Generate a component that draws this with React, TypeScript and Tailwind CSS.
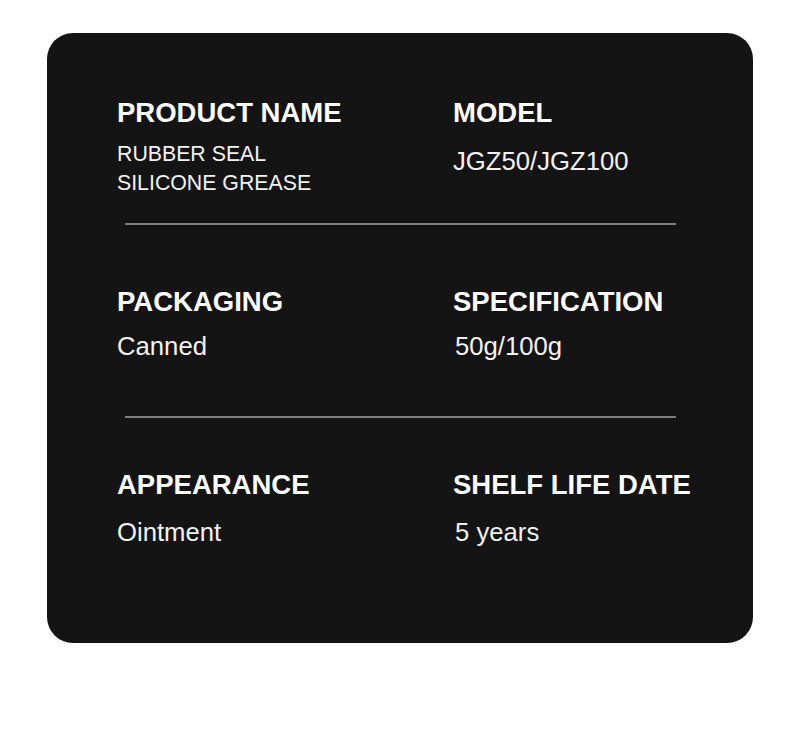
const rows = [
  {
    left: { title: 'PRODUCT NAME', lines: ['RUBBER SEAL', 'SILICONE GREASE'] },
    right: { title: 'MODEL', lines: ['JGZ50/JGZ100'] },
  },
  {
    left: { title: 'PACKAGING', lines: ['Canned'] },
    right: { title: 'SPECIFICATION', lines: ['50g/100g'] },
  },
  {
    left: { title: 'APPEARANCE', lines: ['Ointment'] },
    right: { title: 'SHELF LIFE DATE', lines: ['5 years'] },
  },
]

function Heading({ children }: { children: string }) {
  return <h3 className="text-[27.5px] leading-[32px] font-bold text-white whitespace-nowrap">{children}</h3>
}

function Divider({ className }: { className: string }) {
  return <div className={`ml-[8px] w-[551px] h-[2px] bg-[#7d7d7d] ${className}`} />
}

export default function App() {
  return (
    <div className="w-[790px] h-[736px] bg-white pt-[33px] pl-[47px] font-['Liberation_Sans',Arial,sans-serif]">
      <div className="w-[706px] h-[610px] rounded-[26px] bg-[#141414] pt-[64px] pl-[70px]">
        {/* Row 1 */}
        <div className="grid grid-cols-[336px_1fr] items-start">
          <div>
            <Heading>{rows[0].left.title}</Heading>
            <div className="mt-[11px] text-[21.3px] leading-[29px] text-[#f2f2f2]">
              {rows[0].left.lines.map((l) => (
                <p key={l}>{l}</p>
              ))}
            </div>
          </div>
          <div>
            <Heading>{rows[0].right.title}</Heading>
            <p className="mt-[17px] text-[25.7px] leading-[30px] text-[#f2f2f2]">{rows[0].right.lines[0]}</p>
          </div>
        </div>

        <Divider className="mt-[25px]" />

        {/* Row 2 */}
        <div className="mt-[61px] grid grid-cols-[336px_1fr] items-start">
          <div>
            <Heading>{rows[1].left.title}</Heading>
            <p className="mt-[13px] text-[25.7px] leading-[30px] text-[#f2f2f2]">{rows[1].left.lines[0]}</p>
          </div>
          <div>
            <Heading>{rows[1].right.title}</Heading>
            <p className="mt-[13px] pl-[2px] text-[25.7px] leading-[30px] text-[#f2f2f2]">{rows[1].right.lines[0]}</p>
          </div>
        </div>

        <Divider className="mt-[55px]" />

        {/* Row 3 */}
        <div className="mt-[51px] grid grid-cols-[336px_1fr] items-start">
          <div>
            <Heading>{rows[2].left.title}</Heading>
            <p className="mt-[16px] text-[25.7px] leading-[30px] text-[#f2f2f2]">{rows[2].left.lines[0]}</p>
          </div>
          <div>
            <Heading>{rows[2].right.title}</Heading>
            <p className="mt-[16px] pl-[2px] text-[25.7px] leading-[30px] text-[#f2f2f2]">{rows[2].right.lines[0]}</p>
          </div>
        </div>
      </div>
    </div>
  )
}
